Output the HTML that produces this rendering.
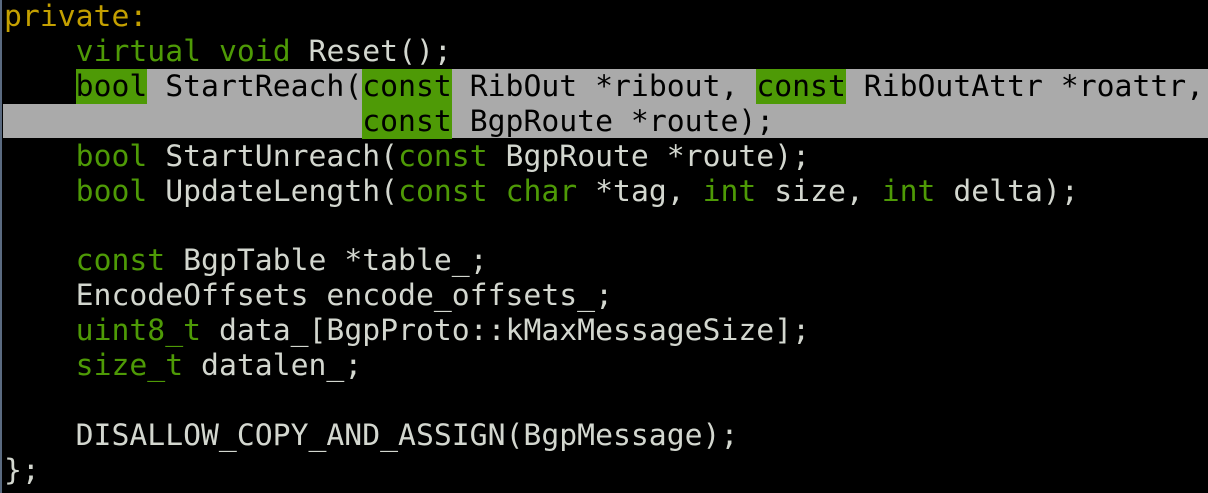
<!DOCTYPE html>
<html><head><style>
html,body{margin:0;padding:0;background:#000;width:1208px;height:493px;overflow:hidden}
body{position:relative}
.bar{position:absolute;left:0;top:0;width:2px;height:493px;background:#5a6a80}
pre{margin:0;position:absolute;left:4px;top:0;font-family:"DejaVu Sans Mono","Liberation Mono",monospace;font-size:29.75px;line-height:34.9px;color:#d3d7cf;white-space:pre}
.k{color:#4e9a06}.y{color:#c4a000}
.g{background:#4e9a06;color:#000}
</style></head><body>
<div class="bar"></div>
<div style="position:absolute;left:76px;top:69px;width:1132px;height:35px;background:#aaa"></div>
<div style="position:absolute;left:3px;top:104px;width:1205px;height:34px;background:#aaa"></div>
<pre><span class="y">private:</span>
    <span class="k">virtual</span> <span class="k">void</span> Reset();
    <span style="color:#000"><span class="g">bool</span> StartReach(<span class="g">const</span> RibOut *ribout, <span class="g">const</span> RibOutAttr *roattr,</span>
<span style="color:#000">                    <span class="g">const</span> BgpRoute *route);</span>
    <span class="k">bool</span> StartUnreach(<span class="k">const</span> BgpRoute *route);
    <span class="k">bool</span> UpdateLength(<span class="k">const</span> <span class="k">char</span> *tag, <span class="k">int</span> size, <span class="k">int</span> delta);

    <span class="k">const</span> BgpTable *table_;
    EncodeOffsets encode_offsets_;
    <span class="k">uint8_t</span> data_[BgpProto::kMaxMessageSize];
    <span class="k">size_t</span> datalen_;

    DISALLOW_COPY_AND_ASSIGN(BgpMessage);
};</pre>
</body></html>
